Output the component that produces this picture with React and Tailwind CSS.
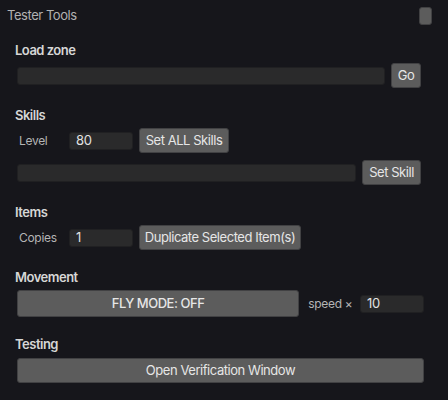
import React, { useState } from "react";

const font = { fontFamily: "Inter, 'Noto Sans', sans-serif" };

const Heading = ({ children }) => (
  <div className="h-4 leading-4 text-[13px] font-semibold tracking-[-0.5px] text-[#d6d6d6] mb-[5px]">
    {children}
  </div>
);

const Field = ({ value, onChange, className }) => (
  <input
    value={value}
    onChange={(e) => onChange && onChange(e.target.value)}
    className={
      "h-[18px] rounded-[3px] bg-[#2a2a2b] border border-[#202022] px-[6px] text-[13px] tracking-[-0.4px] text-[#e2e2e2] outline-none " +
      className
    }
  />
);

const Btn = ({ children, className, onClick }) => (
  <button
    onClick={onClick}
    className={
      "h-[25px] rounded-[3px] bg-[#5c5c5c] border border-[#414143] text-[13px] tracking-[-0.45px] text-[#e6e6e6] whitespace-nowrap " +
      className
    }
  >
    {children}
  </button>
);

export default function App() {
  const [zone, setZone] = useState("");
  const [level, setLevel] = useState("80");
  const [skill, setSkill] = useState("");
  const [copies, setCopies] = useState("1");
  const [fly, setFly] = useState(false);
  const [speed, setSpeed] = useState("10");

  return (
    <div className="w-[448px] h-[400px] bg-[#16161b] overflow-hidden" style={font}>
      {/* header */}
      <div className="h-8 flex items-center justify-between pl-[7px] pr-4">
        <span className="text-[13px] tracking-[-0.45px] text-[#b2b2b2]">Tester Tools</span>
        <div className="w-[13px] h-[18px] rounded-[3px] bg-[#5c5c5c] border border-[#414143]" />
      </div>

      <div className="pl-[15px] pr-[24px] mt-[10px]">
        {/* Load zone */}
        <Heading>Load zone</Heading>
        <div className="flex items-center gap-[6px] pl-[2px] pr-[3px]">
          <Field value={zone} onChange={setZone} className="flex-1" />
          <Btn className="w-[30px]">Go</Btn>
        </div>

        {/* Skills */}
        <div className="mt-[19px]">
          <Heading>Skills</Heading>
          <div className="flex flex-col gap-[7px] pl-[2px]">
            <div className="flex items-center gap-[6px]">
              <span className="w-[46px] pl-[2px] text-[12px] tracking-[-0.3px] text-[#b4b4b4]">Level</span>
              <Field value={level} onChange={setLevel} className="w-16" />
              <Btn className="w-[90px]">Set ALL Skills</Btn>
            </div>
            <div className="flex items-center gap-[6px] pr-[3px]">
              <Field value={skill} onChange={setSkill} className="flex-1" />
              <Btn className="w-[59px]">Set Skill</Btn>
            </div>
          </div>
        </div>

        {/* Items */}
        <div className="mt-[19px]">
          <Heading>Items</Heading>
          <div className="flex items-center gap-[6px] pl-[2px]">
            <span className="w-[46px] pl-[2px] text-[12px] tracking-[-0.3px] text-[#b4b4b4]">Copies</span>
            <Field value={copies} onChange={setCopies} className="w-16" />
            <Btn className="w-[162px]">Duplicate Selected Item(s)</Btn>
          </div>
        </div>

        {/* Movement */}
        <div className="mt-[19px]">
          <Heading>Movement</Heading>
          <div className="flex items-center pl-[2px]">
            <Btn className="w-[283px] !h-[27px] font-medium" onClick={() => setFly(!fly)}>
              {fly ? "FLY MODE: ON" : "FLY MODE: OFF"}
            </Btn>
            <span className="ml-[9px] w-[52px] text-[12px] tracking-[-0.3px] text-[#b4b4b4]">speed ×</span>
            <Field value={speed} onChange={setSpeed} className="w-16" />
          </div>
        </div>

        {/* Testing */}
        <div className="mt-[19px]">
          <Heading>Testing</Heading>
          <div className="pl-[2px]">
            <Btn className="w-full">Open Verification Window</Btn>
          </div>
        </div>
      </div>
    </div>
  );
}
